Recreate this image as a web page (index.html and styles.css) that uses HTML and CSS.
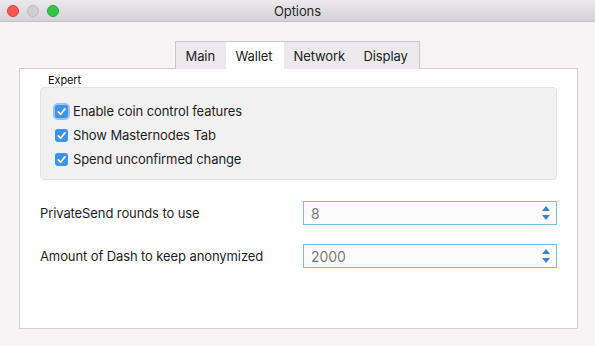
FILE: index.html
```html
<!DOCTYPE html>
<html lang="en">
<head>
  <meta charset="UTF-8" />
  <title>Options</title>
  <link rel="stylesheet" href="styles.css">
</head>
<body>

<div class="window">
  <div class="titlebar">
    <div class="lights">
      <span class="light red"></span>
      <span class="light gray"></span>
      <span class="light green"></span>
    </div>
    <div class="title">Options</div>
  </div>

  <div class="content">
    <div class="tabs">
      <div class="tab">Main</div>
      <div class="tab active">Wallet</div>
      <div class="tab">Network</div>
      <div class="tab">Display</div>
    </div>

    <div class="pane">
      <div class="group-label">Expert</div>
      <div class="group">
        <label class="check focused"><span class="box"><svg viewBox="0 0 12 12"><path d="M3 6.3 L5.2 8.5 L9.2 3.6" /></svg></span>Enable coin control features</label>
        <label class="check"><span class="box"><svg viewBox="0 0 12 12"><path d="M3 6.3 L5.2 8.5 L9.2 3.6" /></svg></span>Show Masternodes Tab</label>
        <label class="check"><span class="box"><svg viewBox="0 0 12 12"><path d="M3 6.3 L5.2 8.5 L9.2 3.6" /></svg></span>Spend unconfirmed change</label>
      </div>

      <div class="row first">
        <span class="row-label">PrivateSend rounds to use</span>
        <div class="spin">
          <span>8</span>
          <svg class="arrows" viewBox="0 0 10 16"><path d="M5 1 L9 6 L1 6 Z" /><path d="M1 10 L9 10 L5 15 Z" /></svg>
        </div>
      </div>
      <div class="row">
        <span class="row-label">Amount of Dash to keep anonymized</span>
        <div class="spin">
          <span>2000</span>
          <svg class="arrows" viewBox="0 0 10 16"><path d="M5 1 L9 6 L1 6 Z" /><path d="M1 10 L9 10 L5 15 Z" /></svg>
        </div>
      </div>
    </div>
  </div>
</div>

</body>
</html>
```

FILE: styles.css
```css
* {
  box-sizing: border-box;
}

body {
  margin: 0;
  width: 595px;
  height: 346px;
  overflow: hidden;
  background: #f6f4f5;
  font-family: Inter, "Liberation Sans", sans-serif;
  font-size: 13px;
  letter-spacing: -0.1px;
  color: #1e1e1e;
}

.window {
  display: flex;
  flex-direction: column;
  height: 346px;
}

.titlebar {
  height: 22px;
  background: linear-gradient(#ebe9eb, #d4d2d4);
  border-bottom: 1px solid #c3c1c3;
  display: flex;
  align-items: center;
  justify-content: center;
  position: relative;
}

.lights {
  position: absolute;
  left: 7px;
  top: 5px;
  display: flex;
  gap: 8px;
}

.light {
  width: 12px;
  height: 12px;
  border-radius: 50%;
}

.red { background: #fc5753; border: 1px solid #df3e3a; }
.gray { background: #d0ced0; border: 1px solid #bcbabc; }
.green { background: #33c748; border: 1px solid #24a93a; }

.title {
  font-size: 13px;
  color: #2a2a2a;
}

.content {
  padding: 19px 17px 0 19px;
  display: flex;
  flex-direction: column;
  align-items: center;
}

.tabs {
  display: flex;
  height: 28px;
  margin-bottom: -1px;
  margin-right: 3px;
  border: 1px solid #c9c7c9;
  border-bottom: none;
  background: #ebe9eb;
  position: relative;
  z-index: 1;
}

.tab {
  padding: 6px 10px 0 10px;
  color: #222;
}

.tab:first-child { width: 50px; }
.tab.active { width: 58px; background: #fff; }
.tab:nth-child(3) { width: 70px; }
.tab:nth-child(4) { width: 65px; }

.pane {
  width: 559px;
  height: 261px;
  background: #fff;
  border: 1px solid #d2d0d2;
  padding: 4px 20px 0 20px;
}

.group-label {
  margin-left: 8px;
  font-size: 11px;
  height: 14px;
  line-height: 14px;
  color: #111;
}

.group {
  height: 93px;
  background: #f2f1f2;
  border: 1px solid #e4e3e4;
  border-radius: 4px;
  padding: 16px 0 0 14px;
  display: flex;
  flex-direction: column;
  gap: 10px;
}

.check {
  display: flex;
  align-items: center;
  gap: 5px;
  height: 14px;
}

.box {
  width: 13px;
  height: 13px;
  border-radius: 3px;
  background: #3d92ec;
  display: flex;
}

.check.focused .box {
  box-shadow: 0 0 0 2px #9cc2f0;
}

.box svg {
  width: 13px;
  height: 13px;
  fill: none;
  stroke: #fff;
  stroke-width: 1.6;
  stroke-linecap: round;
  stroke-linejoin: round;
}

.row {
  display: flex;
  align-items: center;
  justify-content: space-between;
  height: 24px;
  margin-top: 19px;
}

.row.first {
  margin-top: 21px;
}

.row-label {
  color: #1e1e1e;
}

.spin {
  width: 254px;
  height: 24px;
  border: 1px solid #7fbbe3;
  background: #fbfbfb;
  display: flex;
  align-items: center;
  justify-content: space-between;
  padding: 0 5px 0 7px;
  color: #7b7b7b;
  font-size: 14px;
}

.arrows {
  width: 10px;
  height: 16px;
  fill: #3d86c6;
}
```
